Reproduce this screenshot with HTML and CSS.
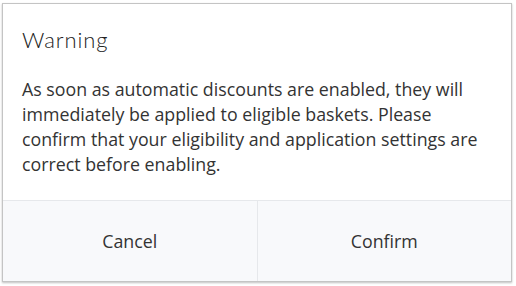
FILE: index.html
```html
<!DOCTYPE html>
<html lang="en">
<head>
    <meta charset="UTF-8">
    <meta name="viewport" content="width=device-width, initial-scale=1.0">
    <title>Warning</title>
    <link rel="stylesheet" href="styles.css">
</head>
<body>
    <div class="dialog">
        <div class="dialog-body">
            <h2>Warning</h2>
            <p>As soon as automatic discounts are enabled, they will immediately be applied to eligible baskets. Please confirm that your eligibility and application settings are correct before enabling.</p>
        </div>
        <div class="dialog-actions">
            <button class="btn">Cancel</button>
            <button class="btn">Confirm</button>
        </div>
    </div>
</body>
</html>
```

FILE: styles.css
```css
* {
    margin: 0;
    padding: 0;
    box-sizing: border-box;
}

body {
    font-family: 'Open Sans', sans-serif;
    background: #ffffff;
    color: #333333;
    padding: 3px 4px 4px 2px;
}

.dialog {
    width: 510px;
    height: 279px;
    background: white;
    border: 1px solid #c4c4c4;
    box-shadow: 0 1px 2px rgba(0, 0, 0, 0.25);
    display: flex;
    flex-direction: column;
}

.dialog-body {
    flex: 1;
    padding: 22px 20px 0 19px;
}

.dialog-body h2 {
    font-family: 'Lato', sans-serif;
    font-weight: 300;
    font-size: 22px;
    letter-spacing: 0.9px;
    line-height: 28px;
    color: #222;
    margin-bottom: 23px;
}

.dialog-body p {
    font-size: 17.8px;
    line-height: 25px;
}

.dialog-actions {
    display: flex;
    height: 81px;
    background: #f8f9fb;
    border-top: 1px solid #e6e8eb;
}

.btn {
    flex: 1;
    border: none;
    background: transparent;
    font-family: 'Open Sans', sans-serif;
    font-size: 17.8px;
    color: #333;
    cursor: pointer;
}

.btn + .btn {
    border-left: 1px solid #e6e8eb;
}
```
